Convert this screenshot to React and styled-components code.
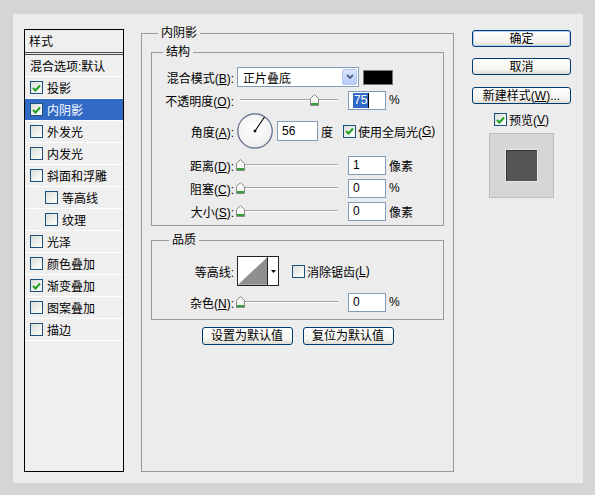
import React from 'react';
import styled, { createGlobalStyle } from 'styled-components';

const GlobalStyle = createGlobalStyle`
  body {
    margin: 0;
    background: #d5d5d5;
    font-family: "Liberation Sans", "Noto Sans CJK SC", sans-serif;
    font-size: 12px;
    color: #000;
  }
  * { box-sizing: border-box; }
`;

const Dialog = styled.div`
  margin: 14px 0 0 13px;
  width: 570px;
  height: 469px;
  background: #ececec;
  padding: 15px 0 0 11px;
  display: flex;
  align-items: flex-start;
`;

/* ---------- left style list ---------- */
const StyleList = styled.div`
  width: 100px;
  height: 443px;
  border: 1px solid #000;
  background: #efefef;
`;

const ListHeader = styled.div`
  height: 25px;
  padding: 3px 0 0 4px;
  border-bottom: 3px double #4a4a4a;
  line-height: 18px;
`;

const ListRow = styled.div`
  height: 22px;
  display: flex;
  align-items: center;
  padding-left: ${p => (p.$indent ? 20 : 5)}px;
  border-bottom: 1px solid #fff;
  background: ${p => (p.$active ? '#316ac5' : 'transparent')};
  color: ${p => (p.$active ? '#fff' : '#000')};
  white-space: nowrap;
  gap: 2px;
`;

/* ---------- group boxes ---------- */
const Group = styled.div`
  position: relative;
  border: 1px solid #999;
  width: ${p => p.$w}px;
  height: ${p => p.$h}px;
  margin-top: ${p => p.$mt || 0}px;
  padding: ${p => p.$pad || '0'};
`;

const GroupTitle = styled.span`
  position: absolute;
  top: -8px;
  left: ${p => p.$left}px;
  padding: 0 3px;
  line-height: 14px;
  background: #ececec;
`;

const MainColumn = styled.div`
  margin-left: 17px;
  margin-top: 4px;
  display: flex;
  flex-direction: column;
`;

/* ---------- field rows ---------- */
const FieldRow = styled.div`
  display: flex;
  align-items: center;
  height: ${p => p.$h || 20}px;
  margin-top: ${p => p.$mt || 0}px;
  white-space: nowrap;
`;

const Label = styled.span`
  width: 82px;
  margin-right: 3px;
  text-align: right;
`;

const Select = styled.div`
  width: 122px;
  height: 20px;
  border: 1px solid #7f9db9;
  background: #fff;
  display: flex;
  align-items: center;
  justify-content: space-between;
  padding: 1px 1px 1px 5px;
`;

const SelectButton = styled.span`
  width: 15px;
  height: 16px;
  border: 1px solid #b2c5f0;
  border-radius: 2px;
  background: linear-gradient(#dbe6fd, #b7cbf7);
  display: flex;
  align-items: center;
  justify-content: center;
`;

const Swatch = styled.div`
  width: 30px;
  height: 15px;
  margin-left: 4px;
  background: #000;
  border: 1px solid #777;
`;

const NumberInput = styled.div`
  width: ${p => p.$w || 38}px;
  height: ${p => p.$h || 19}px;
  margin-left: ${p => p.$ml || 6}px;
  border: 1px solid #7f9db9;
  background: #fff;
  padding-left: 4px;
  display: flex;
  align-items: center;
`;

const Selected = styled.span`
  background: #316ac5;
  color: #fff;
  padding: 0 1px;
  line-height: 15px;
  border-right: 1px solid #000;
`;

const Unit = styled.span`
  margin-left: ${p => p.$ml || 3}px;
`;

const SliderBox = styled.div`
  position: relative;
  width: 105px;
  height: 20px;
  display: flex;
  align-items: center;
`;

const Track = styled.div`
  margin-left: 3px;
  width: 98px;
  height: 2px;
  border-top: 1px solid #a3a3a3;
  border-bottom: 1px solid #fff;
`;

const Thumb = styled.svg`
  position: absolute;
  top: 4px;
`;

const CheckBox = styled.span`
  width: 13px;
  height: 13px;
  flex: none;
  border: 1px solid #1c5180;
  background: linear-gradient(135deg, #dcdcd7, #fff);
  margin-left: ${p => p.$ml || 0}px;
  margin-right: 2px;
  display: inline-flex;
  align-items: center;
  justify-content: center;
`;

const ContourBox = styled.div`
  width: 42px;
  height: 30px;
  border: 1px solid #222;
  display: flex;
  background: #fff;
`;

const ContourArrow = styled.div`
  width: 11px;
  border-left: 1px solid #222;
  display: flex;
  align-items: center;
  justify-content: center;
`;

const ButtonRow = styled.div`
  width: 293px;
  display: flex;
  justify-content: center;
  gap: 10px;
  margin-top: 7px;
`;

const Button = styled.button`
  width: ${p => p.$w || 99}px;
  height: ${p => p.$h || 17}px;
  margin-top: ${p => p.$mt || 0}px;
  padding: 0;
  font: inherit;
  line-height: 14px;
  color: #000;
  border: 1px solid #003c74;
  border-radius: 3px;
  background: linear-gradient(#fff, #f4f3ee 70%, #dedcd3);
  box-shadow: ${p => (p.$default ? 'inset 0 0 0 1px #b5cdf5' : 'none')};
`;

const SideColumn = styled.div`
  margin-left: 18px;
  margin-top: 1px;
  width: 99px;
  display: flex;
  flex-direction: column;
  align-items: center;
`;

const PreviewToggle = styled.div`
  display: flex;
  align-items: center;
  margin-top: 9px;
  height: 13px;
`;

const PreviewBox = styled.div`
  margin-top: 7px;
  width: 65px;
  height: 65px;
  background: #d6d6d6;
  border: 1px solid #bdbdbd;
  display: flex;
  align-items: center;
  justify-content: center;
`;

const PreviewSquare = styled.div`
  width: 33px;
  height: 33px;
  background: #555;
  border: 1px solid #e8e8e8;
  box-shadow: inset 1px 1px 0 #333;
`;

const Check = ({ on, ml }) => (
  <CheckBox $ml={ml}>
    {on && (
      <svg width="9" height="8" viewBox="0 0 9 8">
        <polyline points="1,4 3.5,6.5 8,1.5" fill="none" stroke="#21a121" strokeWidth="2" />
      </svg>
    )}
  </CheckBox>
);

const Slider = ({ value }) => (
  <SliderBox>
    <Track />
    <Thumb width="9" height="12" viewBox="0 0 9 12" style={{ left: 3 + value * 98 - 4 }}>
      <path d="M0.5 4.5 L4.5 0.5 L8.5 4.5 L8.5 11.5 L0.5 11.5 Z" fill="#f7f7f4" stroke="#8a8a8a" />
      <rect x="1" y="9" width="7" height="2" fill="#2fa33a" />
    </Thumb>
  </SliderBox>
);

const Dial = () => (
  <svg width="36" height="36" viewBox="0 0 36 36">
    <defs>
      <radialGradient id="dialFace" cx="45%" cy="40%" r="65%">
        <stop offset="0%" stopColor="#fff" />
        <stop offset="80%" stopColor="#f1f1f1" />
        <stop offset="100%" stopColor="#d4d8e2" />
      </radialGradient>
    </defs>
    <circle cx="18" cy="18" r="17.2" fill="url(#dialFace)" stroke="#5c6c88" strokeWidth="1.2" />
    <line x1="18" y1="18" x2="27.5" y2="4" stroke="#000" strokeWidth="1.1" />
    <rect x="16.8" y="16.8" width="2.4" height="2.4" fill="#000" />
  </svg>
);

const styles = [
  { name: '投影', on: true },
  { name: '内阴影', on: true, active: true },
  { name: '外发光' },
  { name: '内发光' },
  { name: '斜面和浮雕' },
  { name: '等高线', indent: true },
  { name: '纹理', indent: true },
  { name: '光泽' },
  { name: '颜色叠加' },
  { name: '渐变叠加', on: true },
  { name: '图案叠加' },
  { name: '描边' },
];

const App = () => (
  <>
    <GlobalStyle />
    <Dialog>
      <StyleList>
        <ListHeader>样式</ListHeader>
        <ListRow>混合选项:默认</ListRow>
        {styles.map(s => (
          <ListRow key={s.name} $indent={s.indent} $active={s.active}>
            <Check on={s.on} />
            {s.name}
          </ListRow>
        ))}
      </StyleList>

      <MainColumn>
        <Group $w={313} $h={439} $pad="18px 0 0 9px">
          <GroupTitle $left={16}>内阴影</GroupTitle>

          <Group $w={293} $h={174}>
            <GroupTitle $left={11}>结构</GroupTitle>
            <FieldRow $mt={14}>
              <Label>混合模式(<u>B</u>):</Label>
              <Select>
                正片叠底
                <SelectButton>
                  <svg width="8" height="6" viewBox="0 0 8 6">
                    <polyline points="1,1 4,4 7,1" fill="none" stroke="#4d6185" strokeWidth="1.8" />
                  </svg>
                </SelectButton>
              </Select>
              <Swatch />
            </FieldRow>
            <FieldRow $mt={3}>
              <Label>不透明度(<u>O</u>):</Label>
              <Slider value={0.75} />
              <NumberInput>
                <Selected>75</Selected>
              </NumberInput>
              <Unit>%</Unit>
            </FieldRow>
            <FieldRow $h={36} $mt={3}>
              <Label>角度(<u>A</u>):</Label>
              <Dial />
              <NumberInput $w={41} $h={20} $ml={4}>56</NumberInput>
              <Unit>度</Unit>
              <Check on ml={10} />
              使用全局光(<u>G</u>)
            </FieldRow>
            <FieldRow $mt={6}>
              <Label>距离(<u>D</u>):</Label>
              <Slider value={0} />
              <NumberInput>1</NumberInput>
              <Unit>像素</Unit>
            </FieldRow>
            <FieldRow $mt={3}>
              <Label>阻塞(<u>C</u>):</Label>
              <Slider value={0} />
              <NumberInput>0</NumberInput>
              <Unit>%</Unit>
            </FieldRow>
            <FieldRow $mt={3}>
              <Label>大小(<u>S</u>):</Label>
              <Slider value={0} />
              <NumberInput>0</NumberInput>
              <Unit>像素</Unit>
            </FieldRow>
          </Group>

          <Group $w={293} $h={80} $mt={14}>
            <GroupTitle $left={17}>品质</GroupTitle>
            <FieldRow $h={30} $mt={15}>
              <Label>等高线:</Label>
              <ContourBox>
                <svg width="30" height="28" viewBox="0 0 30 28">
                  <polygon points="0,28 30,0 30,28" fill="#8f8f8f" />
                </svg>
                <ContourArrow>
                  <svg width="5" height="3" viewBox="0 0 5 3">
                    <polygon points="0,0 5,0 2.5,3" fill="#000" />
                  </svg>
                </ContourArrow>
              </ContourBox>
              <Check ml={13} />
              消除锯齿(<u>L</u>)
            </FieldRow>
            <FieldRow $mt={6}>
              <Label>杂色(<u>N</u>):</Label>
              <Slider value={0} />
              <NumberInput>0</NumberInput>
              <Unit>%</Unit>
            </FieldRow>
          </Group>

          <ButtonRow>
            <Button $w={91} $h={18}>设置为默认值</Button>
            <Button $w={91} $h={18}>复位为默认值</Button>
          </ButtonRow>
        </Group>
      </MainColumn>

      <SideColumn>
        <Button $default>确定</Button>
        <Button $mt={11}>取消</Button>
        <Button $mt={12}>新建样式(<u>W</u>)...</Button>
        <PreviewToggle>
          <Check on />
          预览(<u>V</u>)
        </PreviewToggle>
        <PreviewBox>
          <PreviewSquare />
        </PreviewBox>
      </SideColumn>
    </Dialog>
  </>
);

export default App;
